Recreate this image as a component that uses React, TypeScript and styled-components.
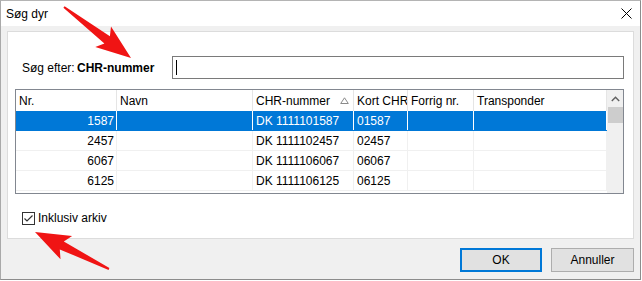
import React from "react";
import styled, { createGlobalStyle } from "styled-components";

const Global = createGlobalStyle`
  html, body { margin: 0; padding: 0; background: #ffffff; }
  body { font-family: "Liberation Sans", Arial, sans-serif; font-size: 12px; color: #000; }
  * { box-sizing: border-box; }
`;

const Page = styled.div`
  position: relative;
  width: 642px;
  height: 281px;
  overflow: hidden;
`;

const Window = styled.div`
  width: 641px;
  height: 280px;
  display: flex;
  flex-direction: column;
  background: #f0f0f0;
  border: 1px solid #8c8c8c;
  border-left-color: #a9a9a9;
  border-top-color: #b4b4b4;
`;

const TitleBar = styled.div`
  height: 25px;
  flex: none;
  background: #ffffff;
  display: flex;
  align-items: center;
  justify-content: space-between;
  padding: 0 8px 0 5px;
  font-size: 12px;
`;

const CloseIcon = styled.svg`
  width: 11px;
  height: 11px;
  margin-right: 0px;
`;

const Body = styled.div`
  flex: 1;
  display: flex;
  flex-direction: column;
  padding: 5px 6px 0 6px;
`;

const Panel = styled.div`
  height: 208px;
  flex: none;
  background: #ffffff;
  border: 1px solid #dcdcdc;
  display: flex;
  flex-direction: column;
  padding: 24px 9px 0 7px;
`;

const SearchRow = styled.div`
  display: flex;
  align-items: center;
  height: 23px;
  padding-left: 7px;
`;

const SearchLabel = styled.span`
  width: 55px;
`;

const SearchField = styled.span`
  font-weight: bold;
  width: 95px;
`;

const Input = styled.div`
  flex: 1;
  height: 23px;
  border: 1px solid #7a7a7a;
  background: #fff;
  display: flex;
  align-items: center;
  padding-left: 3px;
`;

const Caret = styled.div`
  width: 1px;
  height: 15px;
  background: #000;
`;

const Grid = styled.div`
  margin-top: 10px;
  height: 105px;
  border: 1px solid #828790;
  display: flex;
  overflow: hidden;
`;

const ListArea = styled.div`
  flex: 1;
  display: flex;
  flex-direction: column;
`;

const cols = "101px 136px 101px 54px 66px 1fr";

const HeaderRow = styled.div`
  display: grid;
  grid-template-columns: ${cols};
  height: 21px;
  flex: none;
  background: #fff;
`;

const HeaderCell = styled.div`
  display: flex;
  align-items: center;
  justify-content: space-between;
  padding: 0 4px 0 3px;
  border-right: 1px solid #e5e5e5;
  white-space: nowrap;
  overflow: hidden;
`;

const Row = styled.div<{ $selected?: boolean }>`
  display: grid;
  grid-template-columns: ${cols};
  height: 20px;
  flex: none;
  background: ${(p) => (p.$selected ? "#0078d7" : "#fff")};
  color: ${(p) => (p.$selected ? "#fff" : "#000")};
  border-bottom: 1px solid ${(p) => (p.$selected ? "#0078d7" : "#f0f0f0")};
`;

const Cell = styled.div<{ $right?: boolean; $selected?: boolean }>`
  display: flex;
  align-items: center;
  justify-content: ${(p) => (p.$right ? "flex-end" : "flex-start")};
  padding: 0 2px 0 3px;
  border-right: 1px solid ${(p) => (p.$selected ? "#ffffff" : "#f0f0f0")};
  white-space: nowrap;
  overflow: hidden;
`;

const Scrollbar = styled.div`
  width: 16px;
  flex: none;
  background: #f0f0f0;
  display: flex;
  flex-direction: column;
  align-items: center;
`;

const ScrollButton = styled.div`
  width: 16px;
  height: 17px;
  display: flex;
  align-items: center;
  justify-content: center;
`;

const Thumb = styled.div`
  width: 15px;
  height: 16px;
  background: #cdcdcd;
`;

const CheckRow = styled.div`
  display: flex;
  align-items: center;
  gap: 3px;
  margin-top: 17px;
  padding-left: 7px;
`;

const CheckBox = styled.div`
  width: 13px;
  height: 13px;
  border: 1px solid #333;
  background: #fff;
  display: flex;
  align-items: center;
  justify-content: center;
`;

const Footer = styled.div`
  flex: 1;
  display: flex;
  justify-content: flex-end;
  align-items: flex-start;
  gap: 9px;
  padding-top: 9px;
  padding-right: 0px;
`;

const Button = styled.div<{ $default?: boolean; $w: number }>`
  width: ${(p) => p.$w}px;
  height: 24px;
  background: #e1e1e1;
  border: ${(p) => (p.$default ? "2px solid #0078d7" : "1px solid #adadad")};
  display: flex;
  align-items: center;
  justify-content: center;
`;

const Overlay = styled.svg`
  position: absolute;
  left: 0;
  top: 0;
  width: 642px;
  height: 281px;
  pointer-events: none;
`;

type Pt = [number, number];

function arrowPoints(tail: Pt, tip: Pt): string {
  const dx = tip[0] - tail[0];
  const dy = tip[1] - tail[1];
  const len = Math.hypot(dx, dy);
  const u: Pt = [dx / len, dy / len];
  const n: Pt = [-u[1], u[0]];
  const headLen = 30;
  const B: Pt = [tip[0] - headLen * u[0], tip[1] - headLen * u[1]];
  const Bb: Pt = [B[0] - 5 * u[0], B[1] - 5 * u[1]];
  const p = (base: Pt, w: number): Pt => [base[0] + w * n[0], base[1] + w * n[1]];
  const pts: Pt[] = [
    p(tail, -1),
    p(B, -4.5),
    p(Bb, -13),
    tip,
    p(Bb, 13),
    p(B, 4.5),
    p(tail, 1),
  ];
  return pts.map((q) => `${q[0].toFixed(1)},${q[1].toFixed(1)}`).join(" ");
}

const rows = [
  { nr: "1587", chr: "DK 1111101587", kort: "01587" },
  { nr: "2457", chr: "DK 1111102457", kort: "02457" },
  { nr: "6067", chr: "DK 1111106067", kort: "06067" },
  { nr: "6125", chr: "DK 1111106125", kort: "06125" },
];

export default function App() {
  return (
    <Page>
      <Global />
      <Window>
        <TitleBar>
          <span>Søg dyr</span>
          <CloseIcon viewBox="0 0 11 11">
            <path d="M0.5 0.5 L10.5 10.5 M10.5 0.5 L0.5 10.5" stroke="#000" strokeWidth="1" />
          </CloseIcon>
        </TitleBar>
        <Body>
          <Panel>
            <SearchRow>
              <SearchLabel>Søg efter:</SearchLabel>
              <SearchField>CHR-nummer</SearchField>
              <Input>
                <Caret />
              </Input>
            </SearchRow>
            <Grid>
              <ListArea>
                <HeaderRow>
                  <HeaderCell>Nr.</HeaderCell>
                  <HeaderCell>Navn</HeaderCell>
                  <HeaderCell>
                    CHR-nummer
                    <svg width="9" height="7" viewBox="0 0 9 7">
                      <path d="M4.5 0.8 L8.3 6.5 L0.7 6.5 Z" fill="none" stroke="#8a8a8a" strokeWidth="1" />
                    </svg>
                  </HeaderCell>
                  <HeaderCell>Kort CHR</HeaderCell>
                  <HeaderCell>Forrig nr.</HeaderCell>
                  <HeaderCell>Transponder</HeaderCell>
                </HeaderRow>
                {rows.map((r, i) => (
                  <Row key={r.nr} $selected={i === 0}>
                    <Cell $right $selected={i === 0}>{r.nr}</Cell>
                    <Cell $selected={i === 0}></Cell>
                    <Cell $selected={i === 0}>{r.chr}</Cell>
                    <Cell $selected={i === 0}>{r.kort}</Cell>
                    <Cell $selected={i === 0}></Cell>
                    <Cell $selected={i === 0}></Cell>
                  </Row>
                ))}
              </ListArea>
              <Scrollbar>
                <ScrollButton>
                  <svg width="9" height="6" viewBox="0 0 9 6">
                    <path d="M0.8 5 L4.5 1.3 L8.2 5" fill="none" stroke="#606060" strokeWidth="1.4" />
                  </svg>
                </ScrollButton>
                <Thumb />
              </Scrollbar>
            </Grid>
            <CheckRow>
              <CheckBox>
                <svg width="11" height="11" viewBox="0 0 11 11">
                  <path d="M1.5 5.5 L4 8 L9.5 2.5" fill="none" stroke="#333" strokeWidth="1.2" />
                </svg>
              </CheckBox>
              <span>Inklusiv arkiv</span>
            </CheckRow>
          </Panel>
          <Footer>
            <Button $default $w={82}>OK</Button>
            <Button $w={83}>Annuller</Button>
          </Footer>
        </Body>
      </Window>
      <Overlay viewBox="0 0 642 281">
        <polygon points={arrowPoints([64, 7], [131, 58])} fill="#f01414" />
        <polygon points={arrowPoints([109, 269], [35, 232])} fill="#f01414" />
      </Overlay>
    </Page>
  );
}
